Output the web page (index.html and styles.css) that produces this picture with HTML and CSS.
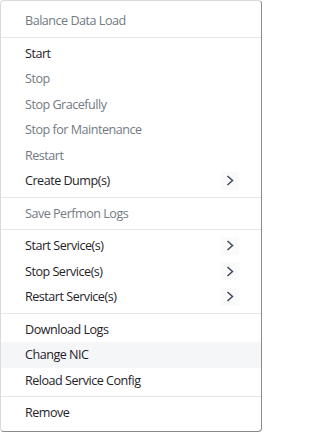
FILE: index.html
```html
<!DOCTYPE html>
<html>
<head>
<meta charset="utf-8">
<link rel="stylesheet" href="styles.css">
</head>
<body>
<div class="menu">
  <div class="item disabled">Balance Data Load</div>
  <div class="divider"></div>
  <div class="item">Start</div>
  <div class="item disabled">Stop</div>
  <div class="item disabled">Stop Gracefully</div>
  <div class="item disabled">Stop for Maintenance</div>
  <div class="item disabled">Restart</div>
  <div class="item">Create Dump(s)<span class="chev"><svg width="8" height="11" viewBox="0 0 8 11"><polyline points="1.5,1 6.5,5.5 1.5,10" /></svg></span></div>
  <div class="divider"></div>
  <div class="item disabled">Save Perfmon Logs</div>
  <div class="divider"></div>
  <div class="item">Start Service(s)<span class="chev"><svg width="8" height="11" viewBox="0 0 8 11"><polyline points="1.5,1 6.5,5.5 1.5,10" /></svg></span></div>
  <div class="item">Stop Service(s)<span class="chev"><svg width="8" height="11" viewBox="0 0 8 11"><polyline points="1.5,1 6.5,5.5 1.5,10" /></svg></span></div>
  <div class="item">Restart Service(s)<span class="chev"><svg width="8" height="11" viewBox="0 0 8 11"><polyline points="1.5,1 6.5,5.5 1.5,10" /></svg></span></div>
  <div class="divider"></div>
  <div class="item">Download Logs</div>
  <div class="item hover">Change NIC</div>
  <div class="item">Reload Service Config</div>
  <div class="divider"></div>
  <div class="item">Remove</div>
</div>
</body>
</html>
```
FILE: styles.css
```css
html, body {
  margin: 0;
  padding: 0;
  background: #ffffff;
}
.menu {
  box-sizing: border-box;
  width: 262px;
  padding: 7px 0 5px;
  border: 1px solid;
  border-color: #dadada #8a8a8a #8a8a8a #dadada;
  border-radius: 4px;
  background: #ffffff;
  font-family: "Open Sans", "Noto Sans", sans-serif;
  font-size: 12.6px;
  letter-spacing: -0.5px;
  color: #1f2328;
}
.item {
  display: flex;
  align-items: center;
  height: 25.5px;
  padding: 0 22px 0 24px;
  white-space: nowrap;
}
.item.disabled {
  color: #737a82;
}
.item.hover {
  background: #f5f6f8;
}
.divider {
  height: 1px;
  margin: 3px 0;
  background: #e6e6e6;
}
.chev {
  margin-left: auto;
  width: 18px;
  height: 18px;
  display: flex;
  align-items: center;
  justify-content: center;
  background: #fafafa;
}
.chev svg polyline {
  fill: none;
  stroke: #3e4a5c;
  stroke-width: 1.5;
}
```
